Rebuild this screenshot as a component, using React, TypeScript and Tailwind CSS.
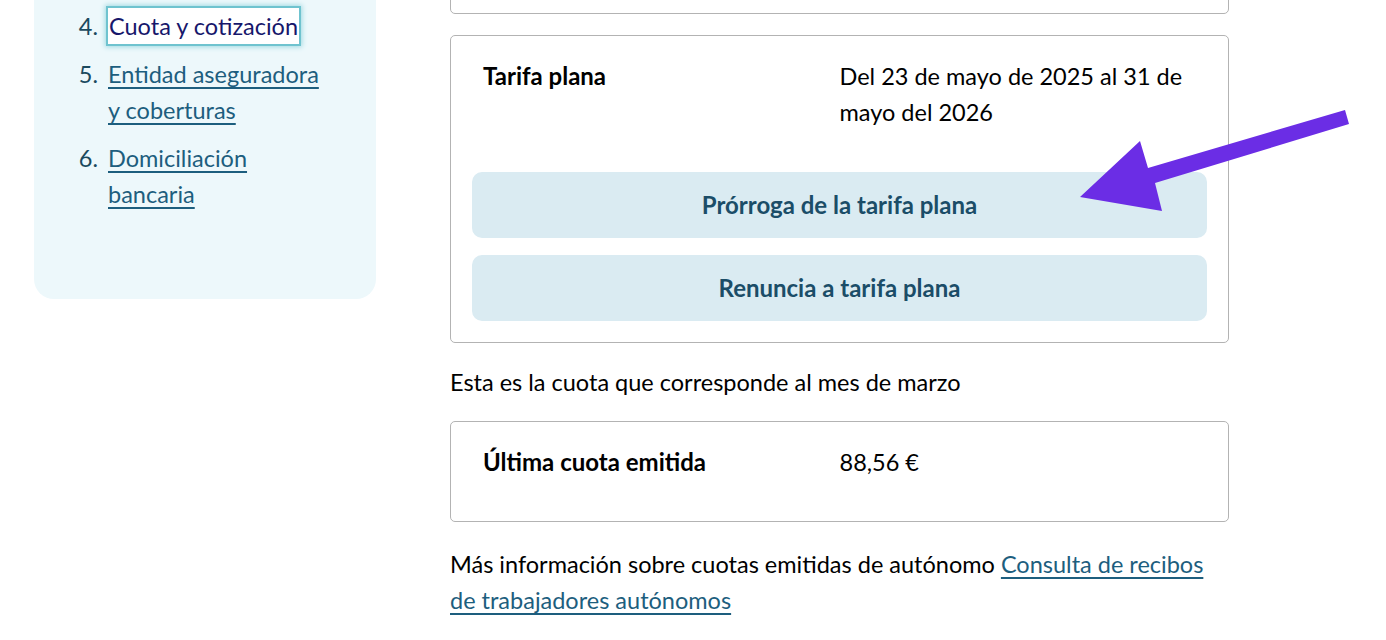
const NAV = [
  { n: '4.', label: 'Cuota y cotización', current: true },
  { n: '5.', label: 'Entidad aseguradora y coberturas' },
  { n: '6.', label: 'Domiciliación bancaria' },
]

function Sidebar() {
  return (
    <aside className="w-[342px] shrink-0 self-start rounded-b-[20px] bg-[#edf8fb] pb-[87px] pl-[34px] pr-[44px] pt-[8px]">
      <ol className="flex flex-col gap-[12px]">
        {NAV.map((item) => (
          <li key={item.n} className="flex text-[23.5px] leading-[36px]">
            <span className="w-[40px] shrink-0 pr-[10px] text-right text-[#1b4a5e]">{item.n}</span>
            {item.current ? (
              <span className="self-start bg-white px-[1px] text-[#17176b] shadow-[0_0_0_2px_#6fc3cf,0_0_5px_3px_#9fd9e1]">
                {item.label}
              </span>
            ) : (
              <a href="#" className="text-[#1d5e7e] underline decoration-[2px] underline-offset-[4px]">
                {item.label}
              </a>
            )}
          </li>
        ))}
      </ol>
    </aside>
  )
}

function Row({ label, value }: { label: string; value: string }) {
  return (
    <div className="grid grid-cols-2 px-[11px] pb-[20px] pt-[1px] leading-[36px] text-black">
      <span className="text-[24px] font-bold">{label}</span>
      <span className="text-[23.5px]">{value}</span>
    </div>
  )
}

function ActionButton({ children }: { children: React.ReactNode }) {
  return (
    <button className="h-[66px] w-full rounded-[10px] bg-[#daebf2] text-[24px] font-bold text-[#1b4d68]">
      {children}
    </button>
  )
}

export default function App() {
  return (
    <div
      className="relative h-[640px] w-[1386px] overflow-hidden bg-white"
      style={{ fontFamily: 'Lato, "Noto Sans", sans-serif' }}
    >
      <div className="flex items-start gap-[74px] pl-[34px]">
        <Sidebar />
        <main className="w-[779px] shrink-0">
          <div className="-mt-[40px] h-[54px] rounded-[5px] border border-[#b3b3b3]" />

          <section className="mt-[21px] flex flex-col rounded-[5px] border border-[#b3b3b3] p-[21px]">
            <Row label="Tarifa plana" value="Del 23 de mayo de 2025 al 31 de mayo del 2026" />
            <div className="mt-[22px] flex flex-col gap-[17px]">
              <ActionButton>Prórroga de la tarifa plana</ActionButton>
              <ActionButton>Renuncia a tarifa plana</ActionButton>
            </div>
          </section>

          <p className="mt-[21px] text-[23.5px] leading-[36px] text-black">
            Esta es la cuota que corresponde al mes de marzo
          </p>

          <section className="mt-[21px] rounded-[5px] border border-[#b3b3b3] p-[21px]">
            <Row label="Última cuota emitida" value="88,56 €" />
          </section>

          <p className="mt-[24px] text-[23.5px] leading-[36px] text-black">
            Más información sobre cuotas emitidas de autónomo{' '}
            <a href="#" className="text-[#1d5e7e] underline decoration-[2px] underline-offset-[4px]">
              Consulta de recibos de trabajadores autónomos
            </a>
          </p>
        </main>
      </div>

      <svg className="pointer-events-none absolute left-0 top-0" width="1386" height="640" viewBox="0 0 1386 640">
        <polygon
          points="1345,110 1349,124 1155,183 1162,211 1080,197 1140,141 1148,168"
          fill="#6b2de5"
        />
      </svg>
    </div>
  )
}
